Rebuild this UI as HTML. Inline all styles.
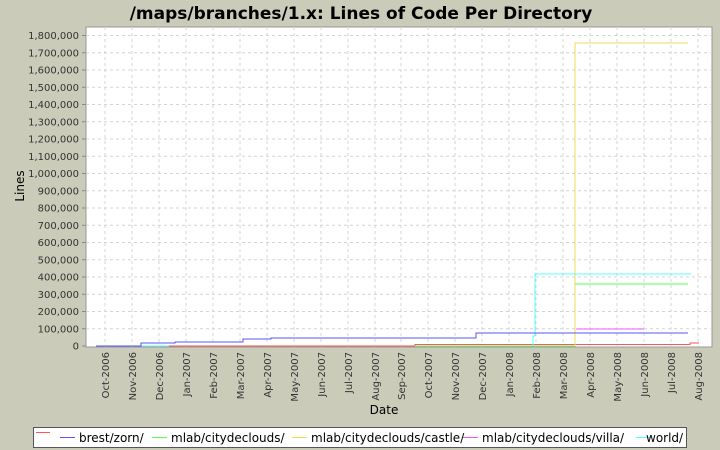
<!DOCTYPE html>
<html><head><meta charset="utf-8"><style>
html,body{margin:0;padding:0;background:#cbcbb9;}
svg{display:block;font-family:"DejaVu Sans","Liberation Sans",sans-serif;}
</style></head><body>
<svg width="720" height="450" xmlns="http://www.w3.org/2000/svg">
<rect width="720" height="450" fill="#cbcbb9"/>
<text x="361" y="19" text-anchor="middle" font-size="17" font-weight="bold" fill="#000">/maps/branches/1.x: Lines of Code Per Directory</text>
<rect x="86" y="27" width="626" height="320" fill="#fff" stroke="#999" stroke-width="1"/>
<g stroke="#d4d4d4" stroke-width="1" stroke-dasharray="3,3">
<line x1="86" x2="712" y1="328.75" y2="328.75"/><line x1="86" x2="712" y1="311.5" y2="311.5"/><line x1="86" x2="712" y1="294.25" y2="294.25"/><line x1="86" x2="712" y1="277" y2="277"/><line x1="86" x2="712" y1="259.75" y2="259.75"/><line x1="86" x2="712" y1="242.5" y2="242.5"/><line x1="86" x2="712" y1="225.25" y2="225.25"/><line x1="86" x2="712" y1="208" y2="208"/><line x1="86" x2="712" y1="190.75" y2="190.75"/><line x1="86" x2="712" y1="173.5" y2="173.5"/><line x1="86" x2="712" y1="156.25" y2="156.25"/><line x1="86" x2="712" y1="139" y2="139"/><line x1="86" x2="712" y1="121.75" y2="121.75"/><line x1="86" x2="712" y1="104.5" y2="104.5"/><line x1="86" x2="712" y1="87.25" y2="87.25"/><line x1="86" x2="712" y1="70" y2="70"/><line x1="86" x2="712" y1="52.75" y2="52.75"/><line x1="86" x2="712" y1="35.5" y2="35.5"/>
<line y1="27" y2="347" x1="105" x2="105"/><line y1="27" y2="347" x1="132" x2="132"/><line y1="27" y2="347" x1="159" x2="159"/><line y1="27" y2="347" x1="186" x2="186"/><line y1="27" y2="347" x1="213" x2="213"/><line y1="27" y2="347" x1="240" x2="240"/><line y1="27" y2="347" x1="267" x2="267"/><line y1="27" y2="347" x1="294" x2="294"/><line y1="27" y2="347" x1="321" x2="321"/><line y1="27" y2="347" x1="348" x2="348"/><line y1="27" y2="347" x1="375" x2="375"/><line y1="27" y2="347" x1="401" x2="401"/><line y1="27" y2="347" x1="428" x2="428"/><line y1="27" y2="347" x1="455" x2="455"/><line y1="27" y2="347" x1="482" x2="482"/><line y1="27" y2="347" x1="509" x2="509"/><line y1="27" y2="347" x1="536" x2="536"/><line y1="27" y2="347" x1="563" x2="563"/><line y1="27" y2="347" x1="590" x2="590"/><line y1="27" y2="347" x1="617" x2="617"/><line y1="27" y2="347" x1="644" x2="644"/><line y1="27" y2="347" x1="671" x2="671"/><line y1="27" y2="347" x1="698" x2="698"/>
</g>
<g font-size="10" fill="#333" text-anchor="end">
<text x="79" y="349.5">0</text><text x="79" y="332.3">100,000</text><text x="79" y="315">200,000</text><text x="79" y="297.8">300,000</text><text x="79" y="280.5">400,000</text><text x="79" y="263.3">500,000</text><text x="79" y="246">600,000</text><text x="79" y="228.8">700,000</text><text x="79" y="211.5">800,000</text><text x="79" y="194.3">900,000</text><text x="79" y="177">1,000,000</text><text x="79" y="159.8">1,100,000</text><text x="79" y="142.5">1,200,000</text><text x="79" y="125.3">1,300,000</text><text x="79" y="108">1,400,000</text><text x="79" y="90.8">1,500,000</text><text x="79" y="73.5">1,600,000</text><text x="79" y="56.3">1,700,000</text><text x="79" y="39">1,800,000</text>
</g>
<g stroke="#888" stroke-width="1">
<line x1="82" x2="86" y1="346" y2="346"/><line x1="82" x2="86" y1="328.75" y2="328.75"/><line x1="82" x2="86" y1="311.5" y2="311.5"/><line x1="82" x2="86" y1="294.25" y2="294.25"/><line x1="82" x2="86" y1="277" y2="277"/><line x1="82" x2="86" y1="259.75" y2="259.75"/><line x1="82" x2="86" y1="242.5" y2="242.5"/><line x1="82" x2="86" y1="225.25" y2="225.25"/><line x1="82" x2="86" y1="208" y2="208"/><line x1="82" x2="86" y1="190.75" y2="190.75"/><line x1="82" x2="86" y1="173.5" y2="173.5"/><line x1="82" x2="86" y1="156.25" y2="156.25"/><line x1="82" x2="86" y1="139" y2="139"/><line x1="82" x2="86" y1="121.75" y2="121.75"/><line x1="82" x2="86" y1="104.5" y2="104.5"/><line x1="82" x2="86" y1="87.25" y2="87.25"/><line x1="82" x2="86" y1="70" y2="70"/><line x1="82" x2="86" y1="52.75" y2="52.75"/><line x1="82" x2="86" y1="35.5" y2="35.5"/>
</g>
<g font-size="10" fill="#333" text-anchor="end">
<text transform="translate(109,352) rotate(-90)">Oct-2006</text><text transform="translate(136,352) rotate(-90)">Nov-2006</text><text transform="translate(163,352) rotate(-90)">Dec-2006</text><text transform="translate(190,352) rotate(-90)">Jan-2007</text><text transform="translate(217,352) rotate(-90)">Feb-2007</text><text transform="translate(244,352) rotate(-90)">Mar-2007</text><text transform="translate(271,352) rotate(-90)">Apr-2007</text><text transform="translate(298,352) rotate(-90)">May-2007</text><text transform="translate(325,352) rotate(-90)">Jun-2007</text><text transform="translate(352,352) rotate(-90)">Jul-2007</text><text transform="translate(379,352) rotate(-90)">Aug-2007</text><text transform="translate(405,352) rotate(-90)">Sep-2007</text><text transform="translate(432,352) rotate(-90)">Oct-2007</text><text transform="translate(459,352) rotate(-90)">Nov-2007</text><text transform="translate(486,352) rotate(-90)">Dec-2007</text><text transform="translate(513,352) rotate(-90)">Jan-2008</text><text transform="translate(540,352) rotate(-90)">Feb-2008</text><text transform="translate(567,352) rotate(-90)">Mar-2008</text><text transform="translate(594,352) rotate(-90)">Apr-2008</text><text transform="translate(621,352) rotate(-90)">May-2008</text><text transform="translate(648,352) rotate(-90)">Jun-2008</text><text transform="translate(675,352) rotate(-90)">Jul-2008</text><text transform="translate(702,352) rotate(-90)">Aug-2008</text>
</g>
<text x="384" y="414" font-size="12" text-anchor="middle" fill="#000">Date</text>
<text transform="translate(24,186) rotate(-90)" font-size="12" text-anchor="middle" fill="#000">Lines</text>
<g fill="none" stroke-width="1">
<polyline stroke="#ff5555" points="169,346 415,346 415,344.5 690,344.5 690,343 699,343"/>
<polyline stroke="#55ff55" points="415,346 575,346 575,284 688,284"/>
<polyline stroke="#eedd55" points="575,346 575,43 688,43"/>
<polyline stroke="#ff55ff" points="576,329 644,329"/>
<polyline stroke="#55ffff" points="141,346 169,346"/>
<polyline stroke="#55ffff" points="533,346 533,336 535,336 535,274 691,274"/>
<polyline stroke="#5555ff" points="96,346 141,346 141,343 175,343 175,342 243,342 243,339 271,339 271,338 476,338 476,333 688,333"/>
</g>
<rect x="33.5" y="427.5" width="653" height="20" fill="#fff" stroke="#555" stroke-width="1"/>
<g stroke-width="1">
<line x1="36" x2="50" y1="432.5" y2="432.5" stroke="#ff5555"/>
<line x1="60" x2="75" y1="437.5" y2="437.5" stroke="#5555ff"/>
<line x1="152" x2="167" y1="437.5" y2="437.5" stroke="#55ff55"/>
<line x1="292" x2="307" y1="437.5" y2="437.5" stroke="#eedd55"/>
<line x1="463" x2="478" y1="437.5" y2="437.5" stroke="#ff55ff"/>
<line x1="636" x2="651" y1="437.5" y2="437.5" stroke="#55ffff"/>
</g>
<g font-size="12" fill="#000">
<text x="79" y="442">brest/zorn/</text>
<text x="171" y="442">mlab/citydeclouds/</text>
<text x="311" y="442">mlab/citydeclouds/castle/</text>
<text x="482" y="442">mlab/citydeclouds/villa/</text>
<text x="646" y="442">world/</text>
</g>
</svg>
</body></html>
